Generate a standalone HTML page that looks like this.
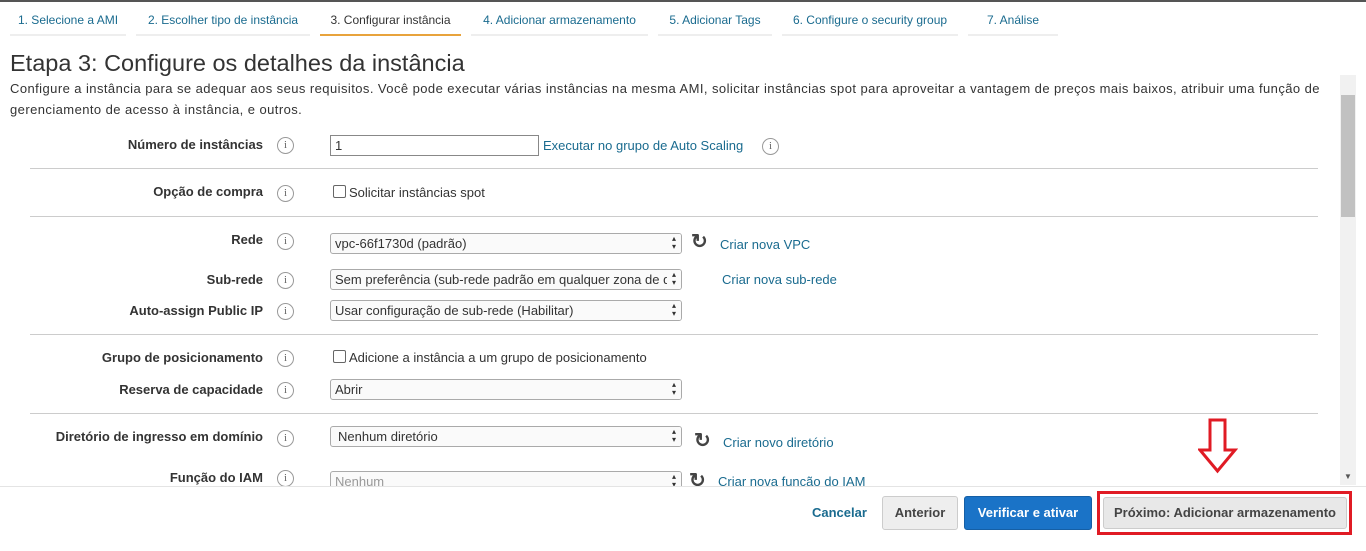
<!DOCTYPE html>
<html><head><meta charset="utf-8"><style>
body{margin:0;width:1366px;height:550px;overflow:hidden;background:#fff;font-family:"Liberation Sans",sans-serif;position:relative;color:#333}
.a{position:absolute}
.tab{position:absolute;top:10px;height:24px;border-bottom:2px solid #eee;font-size:12px;color:#1a6b8f;line-height:20px;text-align:center}
.lbl{position:absolute;right:1103px;font-size:13px;font-weight:bold;color:#333;white-space:nowrap}
.i{position:absolute;left:277px;width:15px;height:15px;border:1px solid #999;border-radius:50%;font-size:11px;line-height:15px;text-align:center;color:#666;font-family:"Liberation Serif",serif}
.sel{position:absolute;left:330px;width:344px;height:19px;border:1px solid #aaa;border-radius:3px;font-size:13px;line-height:19px;padding-left:4px;padding-right:2px;color:#333;background:#fafafa;white-space:nowrap;overflow:hidden}
.sel:after{content:"\25B4\A\25BE";white-space:pre;position:absolute;right:0;top:0;width:14px;height:19px;text-align:center;padding-top:1px;box-sizing:border-box;font-size:8px;line-height:8px;color:#333;background:#fafafa}
.hr{position:absolute;left:30px;width:1288px;height:1px;background:#ccc}
.lk{position:absolute;font-size:13px;color:#1a6b8f;white-space:nowrap}
.rf{position:absolute;font-size:20px;font-weight:bold;color:#444;line-height:18px}
.cb{position:absolute;font-size:13px;white-space:nowrap}
.cb i{display:inline-block;width:11px;height:11px;border:1px solid #666;border-radius:2px;vertical-align:-1px;margin-right:3px}
.btn{position:absolute;top:496px;height:32px;border-radius:3px;font-size:13px;font-weight:bold;line-height:32px;text-align:center}
</style></head><body>
<div class="a" style="left:0;top:0;width:1366px;height:2px;background:#555"></div>
<div class="tab" style="left:10px;width:116px">1. Selecione a AMI</div>
<div class="tab" style="left:136px;width:174px">2. Escolher tipo de instância</div>
<div class="tab" style="left:320px;width:141px;color:#333;border-color:#e8a33c">3. Configurar instância</div>
<div class="tab" style="left:471px;width:177px">4. Adicionar armazenamento</div>
<div class="tab" style="left:658px;width:114px">5. Adicionar Tags</div>
<div class="tab" style="left:782px;width:176px">6. Configure o security group</div>
<div class="tab" style="left:968px;width:90px">7. Análise</div>
<div class="a" style="left:10px;top:50px;font-size:23.5px;color:#333">Etapa 3: Configure os detalhes da instância</div>
<div class="a" style="left:10px;top:78px;width:1340px;font-size:13px;letter-spacing:0.43px;line-height:21px;white-space:nowrap">Configure a instância para se adequar aos seus requisitos. Você pode executar várias instâncias na mesma AMI, solicitar instâncias spot para aproveitar a vantagem de preços mais baixos, atribuir uma função de<br>gerenciamento de acesso à instância, e outros.</div>
<div class="a" style="left:1340px;top:75px;width:16px;height:410px;background:#f1f1f1"></div>
<div class="a" style="left:1341px;top:95px;width:14px;height:122px;background:#c1c1c1"></div>
<div class="a" style="left:1344px;top:472px;font-size:8px;color:#555">▼</div>

<div class="lbl" style="top:137px">Número de instâncias</div><div class="i" style="top:137px">i</div>
<div class="a" style="left:330px;top:135px;width:203px;height:19px;border:1px solid #888;font-size:13px;line-height:19px;padding-left:4px">1</div>
<div class="lk" style="left:543px;top:138px">Executar no grupo de Auto Scaling</div><div class="i" style="top:138px;left:762px">i</div>
<div class="hr" style="top:168px"></div>
<div class="lbl" style="top:184px">Opção de compra</div><div class="i" style="top:185px">i</div>
<div class="cb" style="left:333px;top:185px"><i></i>Solicitar instâncias spot</div>
<div class="hr" style="top:216px"></div>
<div class="lbl" style="top:232px">Rede</div><div class="i" style="top:233px">i</div>
<div class="sel" style="top:233px">vpc-66f1730d (padrão)</div>
<div class="rf" style="left:691px;top:233px">↻</div><div class="lk" style="left:720px;top:237px">Criar nova VPC</div>
<div class="lbl" style="top:272px">Sub-rede</div><div class="i" style="top:272px">i</div>
<div class="sel" style="top:269px">Sem preferência (sub-rede padrão em qualquer zona de disponibilidade)</div>
<div class="lk" style="left:722px;top:272px">Criar nova sub-rede</div>
<div class="lbl" style="top:303px">Auto-assign Public IP</div><div class="i" style="top:303px">i</div>
<div class="sel" style="top:300px">Usar configuração de sub-rede (Habilitar)</div>
<div class="hr" style="top:334px"></div>
<div class="lbl" style="top:350px">Grupo de posicionamento</div><div class="i" style="top:350px">i</div>
<div class="cb" style="left:333px;top:350px"><i></i>Adicione a instância a um grupo de posicionamento</div>
<div class="lbl" style="top:382px">Reserva de capacidade</div><div class="i" style="top:382px">i</div>
<div class="sel" style="top:379px">Abrir</div>
<div class="hr" style="top:413px"></div>
<div class="lbl" style="top:429px">Diretório de ingresso em domínio</div><div class="i" style="top:430px">i</div>
<div class="sel" style="top:426px;padding-left:7px;width:341px">Nenhum diretório</div>
<div class="rf" style="left:694px;top:432px">↻</div><div class="lk" style="left:723px;top:435px">Criar novo diretório</div>
<div class="lbl" style="top:470px">Função do IAM</div><div class="i" style="top:470px">i</div>
<div class="sel" style="top:471px;color:#999">Nenhum</div>
<div class="rf" style="left:689px;top:472px">↻</div><div class="lk" style="left:718px;top:474px">Criar nova função do IAM</div>

<div class="a" style="left:0;top:486px;width:1366px;height:64px;background:#fff;border-top:1px solid #e4e4e4"></div>
<div class="lk" style="left:812px;top:505px;font-weight:bold;color:#1a6b8f">Cancelar</div>
<div class="btn" style="left:882px;width:74px;border:1px solid #ccc;background:#eee;color:#444">Anterior</div>
<div class="btn" style="left:964px;width:126px;background:#1a73c7;border:1px solid #155fa5;color:#fff">Verificar e ativar</div>
<div class="a" style="left:1097px;top:491px;width:249px;height:38px;border:3px solid #e01b24"></div>
<div class="btn" style="left:1103px;top:497px;width:242px;height:30px;line-height:30px;background:#e8e8e8;border:1px solid #ccc;color:#444">Próximo: Adicionar armazenamento</div>
<svg class="a" style="left:1198px;top:418px" width="40" height="56"><path d="M12 2H27V32H37L19.5 53L2 32H12Z" fill="none" stroke="#e01b24" stroke-width="3"/></svg>
</body></html>
